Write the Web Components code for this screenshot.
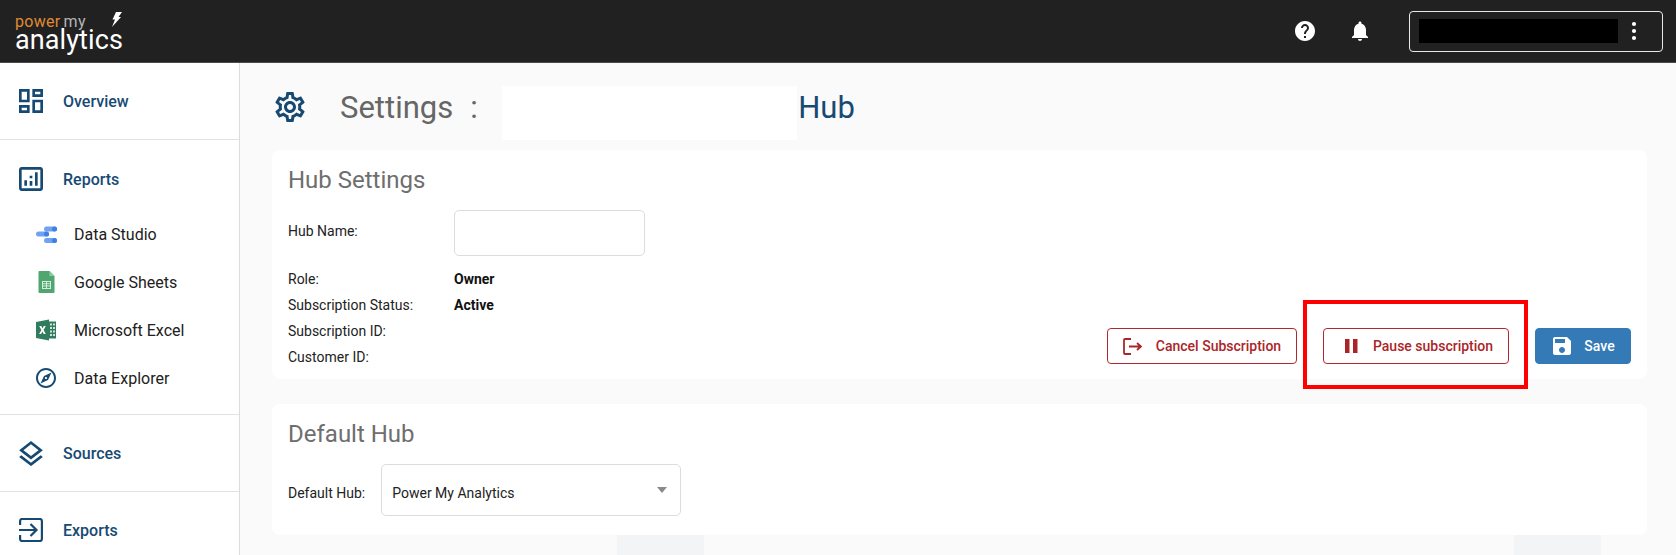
<!DOCTYPE html>
<html>
<head>
<meta charset="utf-8">
<title>Hub Settings</title>
<style>
    html, body { margin: 0; height: 555px; overflow: hidden; }
    body { font-family: Roboto, "Liberation Sans", sans-serif; background: #fafafa; }
</style>
</head>
<body>
<pma-app>
    <pma-header slot="header"></pma-header>
    <pma-sidebar slot="sidebar">
        <pma-nav-item label="Overview">
            <svg slot="icon" width="24" height="24" viewBox="3 3 18 18" fill="#174a73"><path d="M19 5v2h-4V5h4M9 5v6H5V5h4m10 8v6h-4v-6h4M9 17v2H5v-2h4M21 3h-8v6h8V3zM11 3H3v10h8V3zm10 8h-8v10h8V11zm-10 4H3v6h8v-6z"/></svg>
        </pma-nav-item>
        <pma-nav-group>
            <pma-nav-item slot="head" label="Reports" compact>
                <svg slot="icon" width="24" height="24" viewBox="3 3 18 18" fill="#174a73"><path d="M19 3H5c-1.1 0-2 .9-2 2v14c0 1.1.9 2 2 2h14c1.1 0 2-.9 2-2V5c0-1.1-.9-2-2-2zm0 16H5V5h14v14zM7 13h2v4H7zM11 9.500h2v2h-2zM11 13.500h2v3.500h-2zM15 7h2v10h-2z"/></svg>
            </pma-nav-item>
            <pma-sub-item label="Data Studio">
                <svg slot="icon" width="24" height="24" viewBox="0 0 24 24">
                    <rect x="10" y="4.500" width="13" height="5" rx="2.500" fill="#6fa3f2"/><circle cx="20.500" cy="7" r="2.500" fill="#3f7fe8"/>
                    <rect x="2" y="9.500" width="13" height="5" rx="2.500" fill="#6fa3f2"/><circle cx="12.500" cy="12" r="2.500" fill="#3f7fe8"/>
                    <rect x="10" y="16" width="13" height="5" rx="2.500" fill="#6fa3f2"/><circle cx="20.500" cy="18.500" r="2.500" fill="#3f7fe8"/>
                </svg>
            </pma-sub-item>
            <pma-sub-item label="Google Sheets">
                <svg slot="icon" width="24" height="24" viewBox="0 0 24 24">
                    <path d="M5.500 1h10l5 5v16a1 1 0 0 1-1 1h-14a1 1 0 0 1-1-1V2a1 1 0 0 1 1-1z" fill="#4fa76f"/>
                    <path d="M15.500 1l5 5h-5z" fill="#8ccba3"/>
                    <path d="M8 11h9v8H8z M9 13.200h3v-1.200H9z M13 13.200h3v-1.200h-3z M9 15.500h3v-1.300H9z M13 15.500h3v-1.300h-3z M9 18h3v-1.500H9z M13 18h3v-1.500h-3z" fill="#d6ecdd" fill-rule="evenodd"/>
                </svg>
            </pma-sub-item>
            <pma-sub-item label="Microsoft Excel">
                <svg slot="icon" width="24" height="24" viewBox="0 0 24 24">
                    <path d="M12 3.500h10v17H12z" fill="#2f7d5e"/>
                    <path d="M16 5.500h2v2h-2zM19 5.500h2v2h-2zM16 9h2v2h-2zM19 9h2v2h-2zM16 12.500h2v2h-2zM19 12.500h2v2h-2zM16 16h2v2h-2zM19 16h2v2h-2z" fill="#cfe3da"/>
                    <path d="M2 4l13-2.500v21L2 20z" fill="#2f7d5e"/>
                    <path d="M5.200 8h2.100l1.200 2.400L9.800 8h2l-2.200 4 2.200 4h-2.100l-1.300-2.500L7.100 16h-2l2.300-4z" fill="#fff"/>
                </svg>
            </pma-sub-item>
            <pma-sub-item label="Data Explorer">
                <svg slot="icon" width="24" height="24" viewBox="0 0 24 24" fill="#174a73"><path d="M12 2C6.480 2 2 6.480 2 12s4.480 10 10 10 10-4.480 10-10S17.520 2 12 2zm0 18c-4.410 0-8-3.590-8-8s3.590-8 8-8 8 3.590 8 8-3.590 8-8 8zm-5.500-2.500l7.510-3.490L17.500 6.500 9.990 9.990 6.500 17.500zm5.500-6.600c.61 0 1.100.49 1.100 1.100s-.49 1.100-1.100 1.100-1.100-.49-1.100-1.100.49-1.100 1.100-1.100z"/></svg>
            </pma-sub-item>
        </pma-nav-group>
        <pma-nav-item label="Sources">
            <svg slot="icon" width="24" height="25" viewBox="3 2 18 19" fill="#174a73"><path d="M11.990 18.540l-7.370-5.730L3 14.070l9 7 9-7-1.630-1.270-7.380 5.740zM12 16l7.360-5.730L21 9l-9-7-9 7 1.630 1.270L12 16zm0-11.470L17.740 9 12 13.470 6.260 9 12 4.530z"/></svg>
        </pma-nav-item>
        <pma-nav-item label="Exports" last>
            <svg slot="icon" width="24" height="24" viewBox="0 0 24 24" fill="none" stroke="#174a73" stroke-width="2.200"><path d="M1.100 7V3a2 2 0 0 1 2-2h17.800a2 2 0 0 1 2 2v18a2 2 0 0 1-2 2H3.100a2 2 0 0 1-2-2v-4M0 12h17M11.500 6l6 6-6 6"/></svg>
        </pma-nav-item>
    </pma-sidebar>
    <pma-settings slot="main"></pma-settings>
</pma-app>

<script>
class PmaApp extends HTMLElement {
    connectedCallback() {
        this.attachShadow({ mode: 'open' });
        this.shadowRoot.innerHTML = `
            <style>
                :host { display: grid; grid-template-columns: 240px 1fr; grid-template-rows: 63px 492px; height: 555px; }
                .top { grid-column: 1 / 3; }
            </style>
            <div class="top"><slot name="header"></slot></div>
            <slot name="sidebar"></slot>
            <slot name="main"></slot>
        `;
    }
}
customElements.define('pma-app', PmaApp);

class PmaHeader extends HTMLElement {
    connectedCallback() {
        this.attachShadow({ mode: 'open' });
        this.shadowRoot.innerHTML = `
            <style>
                :host { display: flex; align-items: center; height: 63px; box-sizing: border-box; background: #212121; border-bottom: 1px solid #4a4a4a; padding: 0 13px 0 15px; }
                .logo { position: relative; width: 110px; height: 38px; font-family: Roboto, sans-serif; color: #fff; }
                .small { display: block; font-size: 16px; line-height: 15px; letter-spacing: .3px; padding-top: 2px; }
                .power { color: #e08a35; }
                .my { color: #b5b5b5; margin-left: 3px; }
                .big { display: block; font-size: 27px; line-height: 20px; letter-spacing: .1px; margin-top: 1px; }
                .bolt { position: absolute; left: 96px; top: 0; }
                .right { margin-left: auto; display: flex; align-items: center; }
                .icons { display: flex; gap: 31px; margin-right: 37px; }
                .account { width: 254px; height: 41px; box-sizing: border-box; border: 1.500px solid #e8e8e8; border-radius: 4px; display: flex; align-items: center; padding: 0 0 0 8.500px; }
                .masked { width: 199px; height: 24px; background: #000; }
                .dots { margin-left: 4px; }
            </style>
            <div class="logo">
                <span class="small"><span class="power">power</span><span class="my">my</span></span>
                <span class="big">analytics</span>
                <svg class="bolt" width="11" height="15" viewBox="0 0 11 15"><path d="M5 0h6L7.500 5H10L1 15l3-7.500H1.500z" fill="#fff"/></svg>
            </div>
            <div class="right">
                <div class="icons">
                    <svg width="24" height="24" viewBox="0 0 24 24" fill="#fff"><path d="M12 2C6.480 2 2 6.480 2 12s4.480 10 10 10 10-4.480 10-10S17.520 2 12 2zm1 17h-2v-2h2v2zm2.070-7.750l-.9.920C13.450 12.900 13 13.500 13 15h-2v-.5c0-1.100.45-2.100 1.170-2.830l1.240-1.260c.37-.36.590-.86.590-1.410 0-1.100-.9-2-2-2s-2 .9-2 2H8c0-2.210 1.790-4 4-4s4 1.790 4 4c0 .88-.36 1.680-.93 2.250z"/></svg>
                    <svg width="24" height="24" viewBox="0 0 24 24" fill="#fff"><path d="M12 22c1.100 0 2-.9 2-2h-4c0 1.100.89 2 2 2zm6-6v-5c0-3.070-1.640-5.640-4.500-6.320V4c0-.83-.67-1.500-1.500-1.500s-1.500.67-1.500 1.500v.68C7.630 5.360 6 7.920 6 11v5l-2 2v1h16v-1l-2-2z"/></svg>
                </div>
                <div class="account">
                    <div class="masked"></div>
                    <svg class="dots" width="24" height="24" viewBox="0 0 24 24" fill="#fff"><circle cx="12" cy="5" r="2.100"/><circle cx="12" cy="12" r="2.100"/><circle cx="12" cy="19" r="2.100"/></svg>
                </div>
            </div>
        `;
    }
}
customElements.define('pma-header', PmaHeader);

class PmaSidebar extends HTMLElement {
    connectedCallback() {
        this.attachShadow({ mode: 'open' });
        this.shadowRoot.innerHTML = `
            <style>
                :host { display: block; background: #fff; border-right: 1px solid #dcdcdc; overflow: hidden; }
            </style>
            <slot></slot>
        `;
    }
}
customElements.define('pma-sidebar', PmaSidebar);

class PmaNavItem extends HTMLElement {
    connectedCallback() {
        this.attachShadow({ mode: 'open' });
        this.shadowRoot.innerHTML = `
            <style>
                :host { display: flex; align-items: center; height: 76px; padding-left: 19px; border-bottom: 1px solid #e2e2e2; color: #174a73; font-size: 16px; font-weight: 500; }
                :host([compact]) { height: 62px; padding-top: 8px; border-bottom: 0; }
                :host([last]) { border-bottom: 0; }
                .icon { width: 44px; display: flex; }
                .text { padding-top: 1px; }
            </style>
            <span class="icon"><slot name="icon"></slot></span>
            <span class="text">${this.getAttribute('label') || ''}</span>
        `;
    }
}
customElements.define('pma-nav-item', PmaNavItem);

class PmaNavGroup extends HTMLElement {
    connectedCallback() {
        this.attachShadow({ mode: 'open' });
        this.shadowRoot.innerHTML = `
            <style>
                :host { display: block; padding-bottom: 12px; border-bottom: 1px solid #e2e2e2; }
            </style>
            <slot name="head"></slot>
            <slot></slot>
        `;
    }
}
customElements.define('pma-nav-group', PmaNavGroup);

class PmaSubItem extends HTMLElement {
    connectedCallback() {
        this.attachShadow({ mode: 'open' });
        this.shadowRoot.innerHTML = `
            <style>
                :host { display: flex; align-items: center; height: 48px; padding-left: 34px; color: #212121; font-size: 16px; }
                .icon { width: 40px; display: flex; }
            </style>
            <span class="icon"><slot name="icon"></slot></span>
            <span>${this.getAttribute('label') || ''}</span>
        `;
    }
}
customElements.define('pma-sub-item', PmaSubItem);

class PmaCard extends HTMLElement {
    connectedCallback() {
        this.attachShadow({ mode: 'open' });
        this.shadowRoot.innerHTML = `
            <style>
                :host { display: block; background: #fff; border-radius: 8px; padding: 16px 16px 10px; }
                h2 { margin: 0; font-size: 24px; line-height: 28px; font-weight: 400; color: #6e6e6e; }
            </style>
            <h2>${this.getAttribute('heading') || ''}</h2>
            <slot></slot>
        `;
    }
}
customElements.define('pma-card', PmaCard);

class PmaInfoRow extends HTMLElement {
    connectedCallback() {
        this.attachShadow({ mode: 'open' });
        this.shadowRoot.innerHTML = `
            <style>
                :host { display: grid; grid-template-columns: 166px auto; height: 26px; align-items: center; font-size: 14px; color: #222; }
                span, b { padding-top: 1px; }
                b { font-weight: 700; color: #111; }
            </style>
            <span>${this.getAttribute('label') || ''}</span>
            <b>${this.getAttribute('value') || ''}</b>
        `;
    }
}
customElements.define('pma-info-row', PmaInfoRow);

class PmaButton extends HTMLElement {
    connectedCallback() {
        this.attachShadow({ mode: 'open' });
        this.shadowRoot.innerHTML = `
            <style>
                :host { display: inline-flex; align-items: center; height: 36px; box-sizing: border-box; border: 1px solid #b0282d; border-radius: 4px; color: #ab2528; background: #fff; font-size: 14px; font-weight: 500; justify-content: center; }
                :host([primary]) { background: #337ab7; border-color: #337ab7; color: #fff; }
                .icon { display: flex; align-items: center; }
            </style>
            <span class="icon"><slot name="icon"></slot></span>
            <slot></slot>
        `;
    }
}
customElements.define('pma-button', PmaButton);

class PmaSettings extends HTMLElement {
    connectedCallback() {
        this.attachShadow({ mode: 'open' });
        this.shadowRoot.innerHTML = `
            <style>
                :host { display: block; background: #fafafa; padding: 0 29px 0 32px; overflow: hidden; }
                .title { display: flex; align-items: center; height: 87px; font-size: 31px; }
                .gear { margin: 0 35px 0 3px; }
                .label { color: #666; padding-top: 1px; }
                .colon { color: #666; margin-left: 17px; width: 32px; padding-top: 1px; }
                .masked { width: 295px; height: 54px; background: #fff; margin-top: 13px; }
                .hub { color: #174a73; margin-left: 1px; padding-top: 1px; }
                .hub-card { display: flex; justify-content: space-between; }
                .info { flex: none; }
                .name { display: grid; grid-template-columns: 166px 191px; height: 46px; margin: 16px 0 9px; font-size: 14px; color: #222; }
                .name span { margin-top: 13px; }
                .box { box-sizing: border-box; border: 1px solid #dcdcdc; border-radius: 5px; background: #fff; }
                .actions { display: flex; gap: 26px; align-self: flex-end; margin-bottom: 5px; }
                .mark { position: relative; display: flex; }
                .mark i { position: absolute; left: -20px; right: -19px; top: -28px; bottom: -25px; border: 4px solid #f00; }
                .cancel { width: 190px; }
                .cancel svg { margin-right: 14px; }
                .pause { width: 186px; padding-left: 6px; }
                .pause svg { margin-right: 15px; }
                .save { width: 96px; padding-left: 2px; }
                .save svg { margin-right: 13px; }
                .second { margin-top: 25px; }
                .default { display: flex; align-items: center; margin-top: 16px; font-size: 14px; color: #222; padding-bottom: 9px; }
                .default > span { padding-top: 6px; }
                .select { width: 300px; height: 52px; box-sizing: border-box; margin-left: 16px; display: flex; align-items: center; padding: 6px 10px 0; position: relative; color: #222; }
                .caret { position: absolute; right: 13px; top: 22px; width: 0; height: 0; border: 5px solid transparent; border-top: 6px solid #8a8a8a; border-bottom: 0; }
                .strip { display: flex; height: 20px; padding-left: 345px; gap: 810px; }
                .strip span { width: 87px; background: #f3f4f6; }
            </style>
            <div class="title">
                <svg class="gear" width="30" height="30" viewBox="2 2 20 20" fill="#174a73"><path d="M19.430 12.980c.04-.32.07-.64.07-.98 0-.34-.03-.66-.07-.98l2.110-1.650c.19-.15.24-.42.12-.64l-2-3.460c-.09-.16-.26-.25-.44-.25-.06 0-.12.01-.17.03l-2.490 1c-.52-.4-1.080-.73-1.690-.98l-.38-2.650C14.460 2.180 14.250 2 14 2h-4c-.25 0-.46.18-.49.42l-.38 2.650c-.61.25-1.170.59-1.690.98l-2.490-1c-.06-.02-.12-.03-.18-.03-.17 0-.34.09-.43.25l-2 3.460c-.13.22-.07.49.12.64l2.110 1.650c-.04.32-.07.65-.07.98 0 .33.03.66.07.98l-2.110 1.650c-.19.15-.24.42-.12.64l2 3.460c.09.16.26.25.44.25.06 0 .12-.01.17-.03l2.490-1c.52.4 1.080.73 1.690.98l.38 2.650c.03.24.24.42.49.42h4c.25 0 .46-.18.49-.42l.38-2.650c.61-.25 1.170-.59 1.690-.98l2.490 1c.06.02.12.03.18.03.17 0 .34-.09.43-.25l2-3.460c.12-.22.07-.49-.12-.64l-2.110-1.650zm-1.980-1.710c.04.31.05.52.05.73 0 .21-.02.43-.05.73l-.14 1.130.89.7 1.080.84-.7 1.210-1.270-.51-1.040-.42-.9.68c-.43.32-.84.56-1.250.73l-1.060.43-.16 1.130-.2 1.350h-1.400l-.19-1.350-.16-1.130-1.060-.43c-.43-.18-.83-.41-1.230-.71l-.91-.7-1.060.43-1.270.51-.7-1.210 1.080-.84.89-.7-.14-1.130c-.03-.31-.05-.54-.05-.74s.02-.43.05-.73l.14-1.130-.89-.7-1.080-.84.7-1.210 1.270.51 1.040.42.9-.68c.43-.32.84-.56 1.250-.73l1.060-.43.16-1.130.2-1.350h1.390l.19 1.350.16 1.130 1.060.43c.43.18.83.41 1.230.71l.91.7 1.060-.43 1.270-.51.7 1.210-1.070.85-.89.7.14 1.130zM12 8c-2.210 0-4 1.790-4 4s1.790 4 4 4 4-1.790 4-4-1.790-4-4-4zm0 6c-1.100 0-2-.9-2-2s.9-2 2-2 2 .9 2 2-.9 2-2 2z"/></svg>
                <span class="label">Settings</span>
                <span class="colon">:</span>
                <div class="masked"></div>
                <span class="hub">Hub</span>
            </div>
            <pma-card heading="Hub Settings">
                <div class="hub-card">
                    <div class="info">
                        <div class="name"><span>Hub Name:</span><div class="box"></div></div>
                        <pma-info-row label="Role:" value="Owner"></pma-info-row>
                        <pma-info-row label="Subscription Status:" value="Active"></pma-info-row>
                        <pma-info-row label="Subscription ID:"></pma-info-row>
                        <pma-info-row label="Customer ID:"></pma-info-row>
                    </div>
                    <div class="actions">
                        <pma-button class="cancel">
                            <svg slot="icon" width="19" height="17" viewBox="0 0 19 17" fill="none" stroke="#ab2528" stroke-width="1.800"><path d="M8 1H2a1 1 0 0 0-1 1v13a1 1 0 0 0 1 1h6M6 8.500h12M14 5l4 3.500-4 3.500"/></svg>
                            Cancel Subscription
                        </pma-button>
                        <div class="mark">
                            <pma-button class="pause">
                                <svg slot="icon" width="13" height="14" viewBox="0 0 13 14" fill="#ab2528"><path d="M0 0h4.500v14H0zM8 0h4.500v14H8z"/></svg>
                                Pause subscription
                            </pma-button>
                            <i></i>
                        </div>
                        <pma-button class="save" primary>
                            <svg slot="icon" width="18" height="18" viewBox="3 3 18 18" fill="#fff"><path d="M17 3H5c-1.110 0-2 .9-2 2v14c0 1.100.89 2 2 2h14c1.100 0 2-.9 2-2V7l-4-4zm-5 16c-1.660 0-3-1.340-3-3s1.340-3 3-3 3 1.340 3 3-1.340 3-3 3zm3-10H5V5h10v4z"/></svg>
                            Save
                        </pma-button>
                    </div>
                </div>
            </pma-card>
            <pma-card class="second" heading="Default Hub">
                <div class="default">
                    <span>Default Hub:</span>
                    <div class="select box">Power My Analytics<span class="caret"></span></div>
                </div>
            </pma-card>
            <div class="strip"><span></span><span></span></div>
        `;
    }
}
customElements.define('pma-settings', PmaSettings);
</script>
</body>
</html>
